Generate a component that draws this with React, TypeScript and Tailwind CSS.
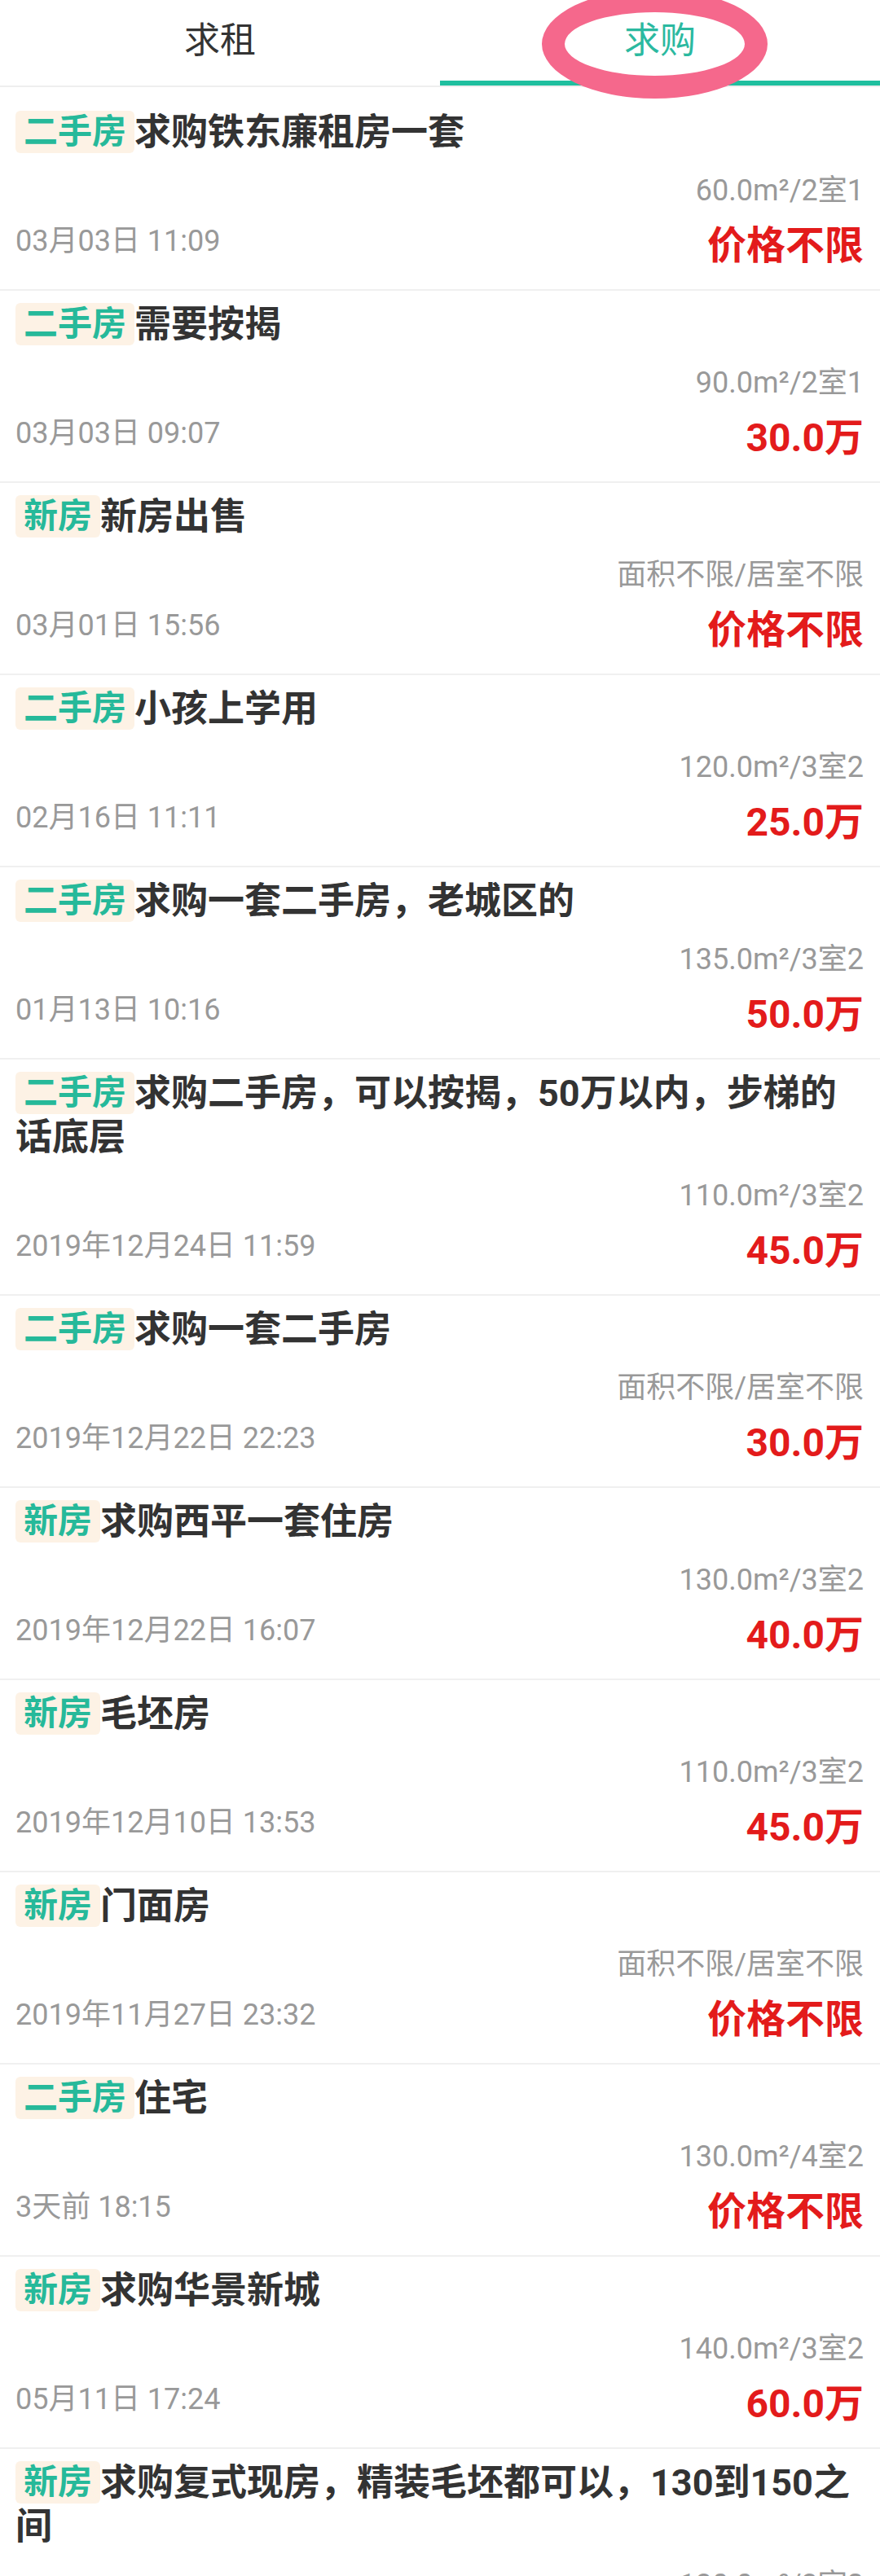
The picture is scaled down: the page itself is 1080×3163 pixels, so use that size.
type WantedItem = {
  tag: string;
  title: string;
  area: string;
  date: string;
  price: string;
};

const wanted: WantedItem[] = [
  { tag: "二手房", title: "求购铁东廉租房一套", area: "60.0m²/2室1", date: "03月03日 11:09", price: "价格不限" },
  { tag: "二手房", title: "需要按揭", area: "90.0m²/2室1", date: "03月03日 09:07", price: "30.0万" },
  { tag: "新房", title: "新房出售", area: "面积不限/居室不限", date: "03月01日 15:56", price: "价格不限" },
  { tag: "二手房", title: "小孩上学用", area: "120.0m²/3室2", date: "02月16日 11:11", price: "25.0万" },
  { tag: "二手房", title: "求购一套二手房，老城区的", area: "135.0m²/3室2", date: "01月13日 10:16", price: "50.0万" },
  { tag: "二手房", title: "求购二手房，可以按揭，50万以内，步梯的话底层", area: "110.0m²/3室2", date: "2019年12月24日 11:59", price: "45.0万" },
  { tag: "二手房", title: "求购一套二手房", area: "面积不限/居室不限", date: "2019年12月22日 22:23", price: "30.0万" },
  { tag: "新房", title: "求购西平一套住房", area: "130.0m²/3室2", date: "2019年12月22日 16:07", price: "40.0万" },
  { tag: "新房", title: "毛坯房", area: "110.0m²/3室2", date: "2019年12月10日 13:53", price: "45.0万" },
  { tag: "新房", title: "门面房", area: "面积不限/居室不限", date: "2019年11月27日 23:32", price: "价格不限" },
  { tag: "二手房", title: "住宅", area: "130.0m²/4室2", date: "3天前 18:15", price: "价格不限" },
  { tag: "新房", title: "求购华景新城", area: "140.0m²/3室2", date: "05月11日 17:24", price: "60.0万" },
  { tag: "新房", title: "求购复式现房，精装毛坯都可以，130到150之间", area: "130.0m²/3室2", date: "05月08日 10:32", price: "价格不限" },
];

const Tabs = () => {
  return (
    <div className="relative flex h-[107px] border-b-2 border-[#eeeeee]">
      <div className="flex flex-1 flex-col">
        <div className="flex flex-1 items-center justify-center text-[44px] text-[#333333]">求租</div>
        <div className="h-[6px]" />
      </div>
      <div className="flex flex-1 flex-col">
        <div className="flex flex-1 items-center justify-center text-[44px] text-[#2bb9a0]">求购</div>
        <div className="h-[6px] bg-[#1fbf9f]" />
      </div>
    </div>
  );
};

const WantedRow = ({ item }: { item: WantedItem }) => {
  return (
    <div className="border-b-2 border-[#f0f0f0] pb-[25px] pl-[19px] pr-[20px] pt-[15px]">
      <p className="text-[45px] font-bold leading-[54px] text-[#333333]">
        <span className="inline-block h-[52px] rounded-[6px] bg-[#fdf2e5] px-[10px] align-top text-[42px] leading-[52px] text-[#26b99a]">
          {item.tag}
        </span>
        {item.title}
      </p>
      <p className="mt-[22px] text-right text-[36px] leading-[44px] text-[#999999]">{item.area}</p>
      <div className="mt-[18px] flex items-start justify-between">
        <span className="text-[36px] leading-[44px] text-[#999999]">{item.date}</span>
        <span className="text-[48px] font-bold leading-[56px] text-[#e31b1b]">{item.price}</span>
      </div>
    </div>
  );
};

export default function App() {
  return (
    <div className="relative h-[3163px] w-[1080px] overflow-hidden bg-white font-['Roboto','Noto_Sans_CJK_SC',sans-serif]">
      <Tabs />
      <div className="pt-[14px]">
        {wanted.map((item, i) => (
          <WantedRow key={i} item={item} />
        ))}
      </div>
      {/* pink marker ring drawn over the active tab */}
      <div className="pointer-events-none absolute left-[665px] top-[-13px] z-10 h-[134px] w-[277px] rounded-[50%] border-[28px] border-[#f5688c]" />
    </div>
  );
}
